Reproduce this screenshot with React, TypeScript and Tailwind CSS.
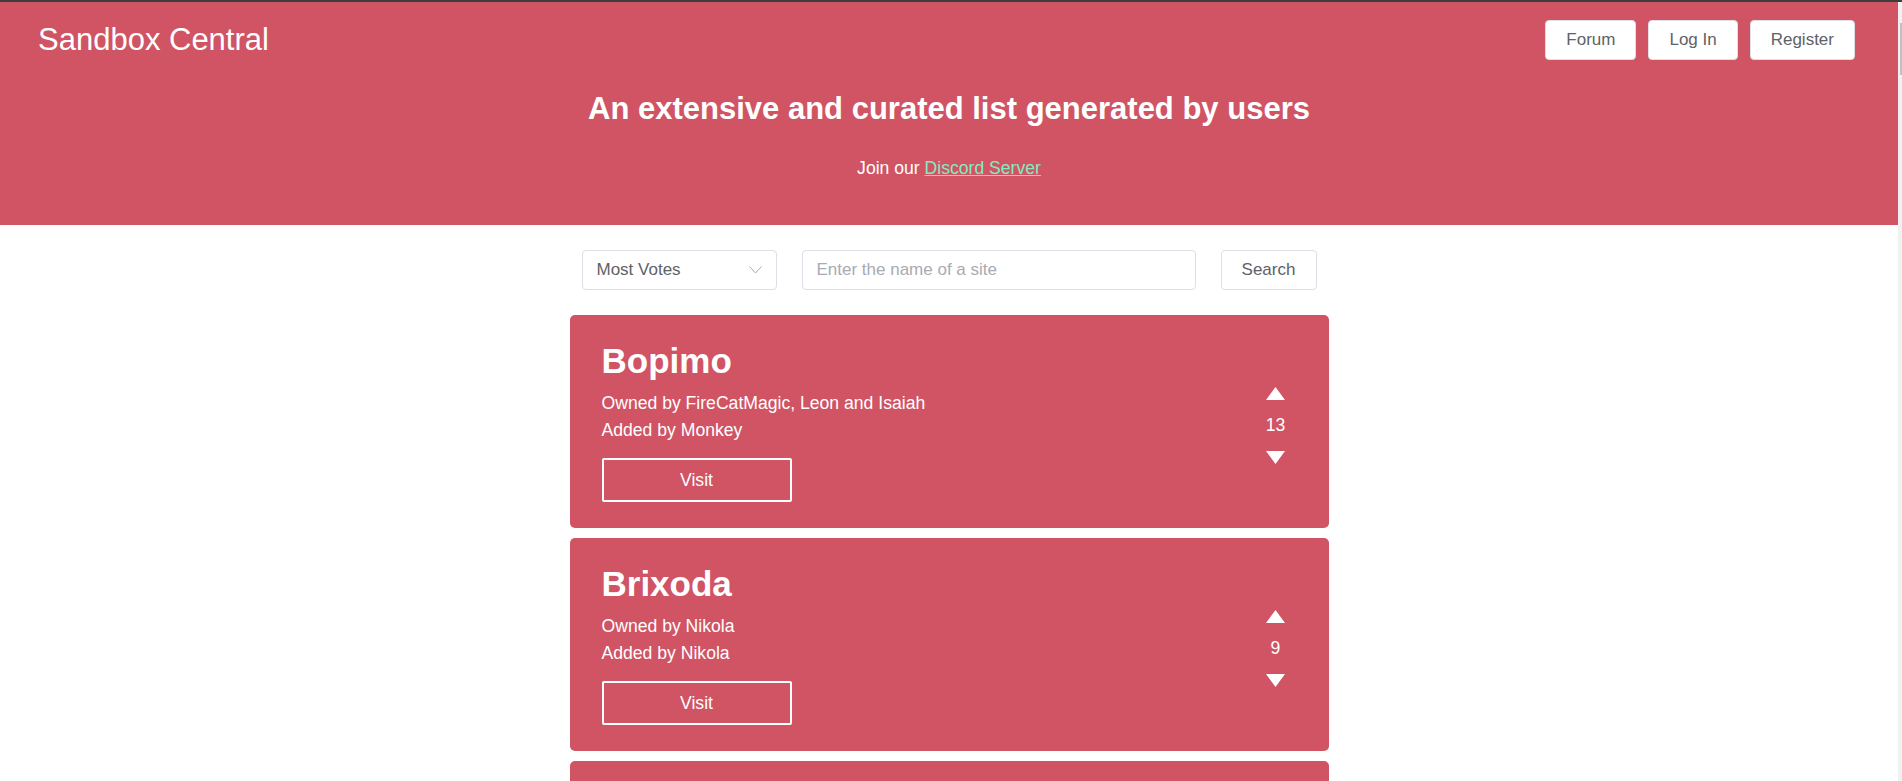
import React from "react";

type Site = {
    name: string;
    owners: string;
    addedBy: string;
    votes: number;
};

const sites: Site[] = [
    { name: "Bopimo", owners: "FireCatMagic, Leon and Isaiah", addedBy: "Monkey", votes: 13 },
    { name: "Brixoda", owners: "Nikola", addedBy: "Nikola", votes: 9 },
    { name: "Polytoria", owners: "Polytoria Team", addedBy: "Monkey", votes: 7 },
];

function Arrow({ down }: { down?: boolean }) {
    return (
        <svg width="19" height="13" viewBox="0 0 19 13" className="block">
            {down ? (
                <polygon points="0,0 19,0 9.5,13" fill="white" />
            ) : (
                <polygon points="9.5,0 19,13 0,13" fill="white" />
            )}
        </svg>
    );
}

function SiteCard({ site }: { site: Site }) {
    return (
        <div className="flex shrink-0 items-center justify-between h-[213px] rounded-[5px] bg-[#d05464] text-white">
            <div className="flex flex-col pl-[32px] pt-[26px] pb-[26px]">
                <h2 className="text-[35px] font-bold leading-[40px]">{site.name}</h2>
                <p className="mt-[9px] text-[17.6px] leading-[27px]">Owned by {site.owners}</p>
                <p className="text-[17.6px] leading-[27px]">Added by {site.addedBy}</p>
                <button className="mt-[14px] w-[190px] h-[44px] border-2 border-white rounded-[2px] text-[17.6px]">
                    Visit
                </button>
            </div>
            <div className="flex flex-col items-center w-[30px] mr-[38px] pt-[8px]">
                <Arrow />
                <span className="mt-[15px] text-[17.6px] leading-[20px]">{site.votes}</span>
                <div className="mt-[16px]">
                    <Arrow down />
                </div>
            </div>
        </div>
    );
}

export default function App() {
    return (
        <div className="flex flex-col h-screen overflow-hidden bg-white font-['Liberation_Sans',Arial,sans-serif]">
            <div className="h-[2px] shrink-0 bg-[#3d3d3d]" />
            <div className="flex flex-1 min-h-0">
                <div className="flex flex-col flex-1 min-w-0 overflow-hidden">
                    <header className="shrink-0 h-[223px] bg-[#d05464] text-white">
                        <div className="flex items-center justify-between h-[40px] mt-[18px] pl-[38px] pr-[43px]">
                            <span className="text-[31px] leading-[36px]">Sandbox Central</span>
                            <div className="flex gap-[12px]">
                                {["Forum", "Log In", "Register"].map((label) => (
                                    <button
                                        key={label}
                                        className="h-[40px] px-[20px] bg-white border border-[#dcdfe6] rounded-[4px] text-[17px] text-[#606266]"
                                    >
                                        {label}
                                    </button>
                                ))}
                            </div>
                        </div>
                        <h1 className="mt-[31px] text-center text-[31px] font-bold leading-[36px]">
                            An extensive and curated list generated by users
                        </h1>
                        <p className="mt-[31px] text-center text-[17.6px] leading-[20px]">
                            Join our{" "}
                            <a href="#" className="text-[#80ecc0] underline">
                                Discord Server
                            </a>
                        </p>
                    </header>

                    <div className="flex justify-center gap-[25px] mt-[25px] shrink-0">
                        <div className="flex items-center justify-between w-[195px] h-[40px] px-[14px] border border-[#dcdfe6] rounded-[4px] text-[17px] text-[#606266]">
                            <span>Most Votes</span>
                            <svg width="13" height="8" viewBox="0 0 13 8" fill="none">
                                <polyline points="0.5,0.5 6.5,7 12.5,0.5" stroke="#a8abb2" strokeWidth="1" />
                            </svg>
                        </div>
                        <input
                            className="w-[394px] h-[40px] px-[14px] border border-[#dcdfe6] rounded-[4px] text-[17px] text-[#606266] placeholder:text-[#a8abb2] outline-none"
                            placeholder="Enter the name of a site"
                        />
                        <button className="w-[96px] h-[40px] border border-[#dcdfe6] rounded-[4px] text-[17px] text-[#606266]">
                            Search
                        </button>
                    </div>

                    <div className="flex flex-col gap-[10px] w-[759px] mx-auto mt-[25px]">
                        {sites.map((site) => (
                            <SiteCard key={site.name} site={site} />
                        ))}
                    </div>
                </div>
                <div className="w-[4px] shrink-0 bg-[#f1f1f1] pl-[2px]">
                    <div className="w-[2px] h-[52px] mt-[21px] bg-[#c1c1c1]" />
                </div>
            </div>
        </div>
    );
}
